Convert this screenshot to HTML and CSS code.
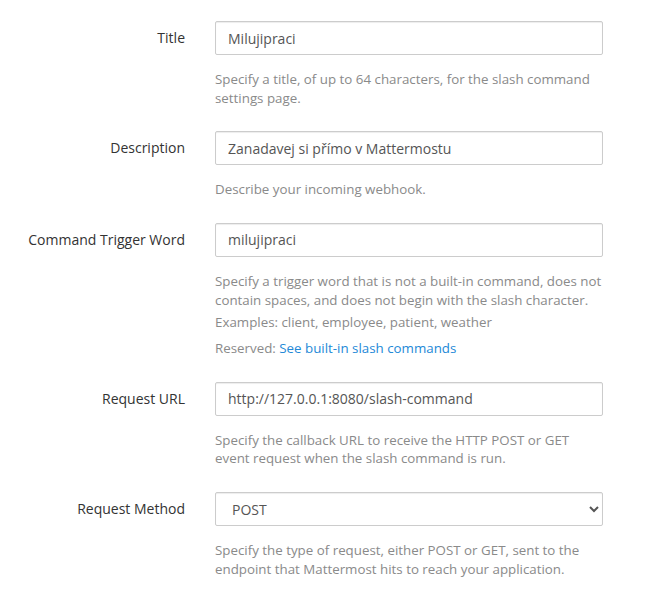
FILE: index.html
```html
<!DOCTYPE html>
<html>
<head>
<meta charset="utf-8">
<link rel="stylesheet" href="styles.css">
</head>
<body>
<form class="form">
  <div class="row">
    <label class="label" for="title">Title</label>
    <div class="field">
      <input id="title" class="control" type="text" value="Milujipraci">
      <div class="help">Specify a title, of up to 64 characters, for the slash command settings page.</div>
    </div>
  </div>
  <div class="row">
    <label class="label" for="desc">Description</label>
    <div class="field">
      <input id="desc" class="control" type="text" value="Zanadavej si přímo v Mattermostu">
      <div class="help">Describe your incoming webhook.</div>
    </div>
  </div>
  <div class="row">
    <label class="label" for="trigger">Command Trigger Word</label>
    <div class="field">
      <input id="trigger" class="control" type="text" value="milujipraci">
      <div class="help">Specify a trigger word that is not a built-in command, does not contain spaces, and does not begin with the slash character.</div>
      <div class="help help-sub">Examples: client, employee, patient, weather</div>
      <div class="help help-sub2">Reserved: <a class="link" href="#">See built-in slash commands</a></div>
    </div>
  </div>
  <div class="row">
    <label class="label" for="url">Request URL</label>
    <div class="field">
      <input id="url" class="control" type="text" value="http://127.0.0.1:8080/slash-command">
      <div class="help">Specify the callback URL to receive the HTTP POST or GET event request when the slash command is run.</div>
    </div>
  </div>
  <div class="row">
    <label class="label" for="method">Request Method</label>
    <div class="field">
      <select id="method" class="control select">
        <option>POST</option>
        <option>GET</option>
      </select>
      <div class="help">Specify the type of request, either POST or GET, sent to the endpoint that Mattermost hits to reach your application.</div>
    </div>
  </div>
</form>
</body>
</html>
```

FILE: styles.css
```css
html, body {
  margin: 0;
  padding: 0;
  background: #ffffff;
}
body {
  font-family: "Open Sans", "Liberation Sans", sans-serif;
  font-size: 14px;
  line-height: 20px;
  color: #333333;
}
.form {
  padding-top: 21px;
  width: 618px;
}
.row {
  display: grid;
  grid-template-columns: 200px 418px;
  margin-bottom: 24px;
}
.label {
  text-align: right;
  padding: 7px 15px 0 0;
  color: #333333;
  font-size: 14px;
  line-height: 20px;
}
.field {
  padding: 0 15px;
}
.control {
  display: block;
  box-sizing: border-box;
  width: 100%;
  height: 34px;
  padding: 6px 12px;
  font-family: "Open Sans", "Liberation Sans", sans-serif;
  font-size: 14px;
  line-height: 20px;
  color: #555555;
  background: #ffffff;
  border: 1px solid #cccccc;
  border-radius: 2px;
  box-shadow: inset 0 1px 1px rgba(0, 0, 0, 0.075);
  margin: 0;
  outline: none;
}
.select {
  padding: 6px 8px 6px 12px;
}
.help {
  margin-top: 15px;
  font-size: 13.33px;
  line-height: 18.66px;
  color: #8a8a8a;
}
.help-sub {
  margin-top: 4px;
}
.help-sub2 {
  margin-top: 7px;
}
.link {
  color: #2389d7;
  text-decoration: none;
}
```
